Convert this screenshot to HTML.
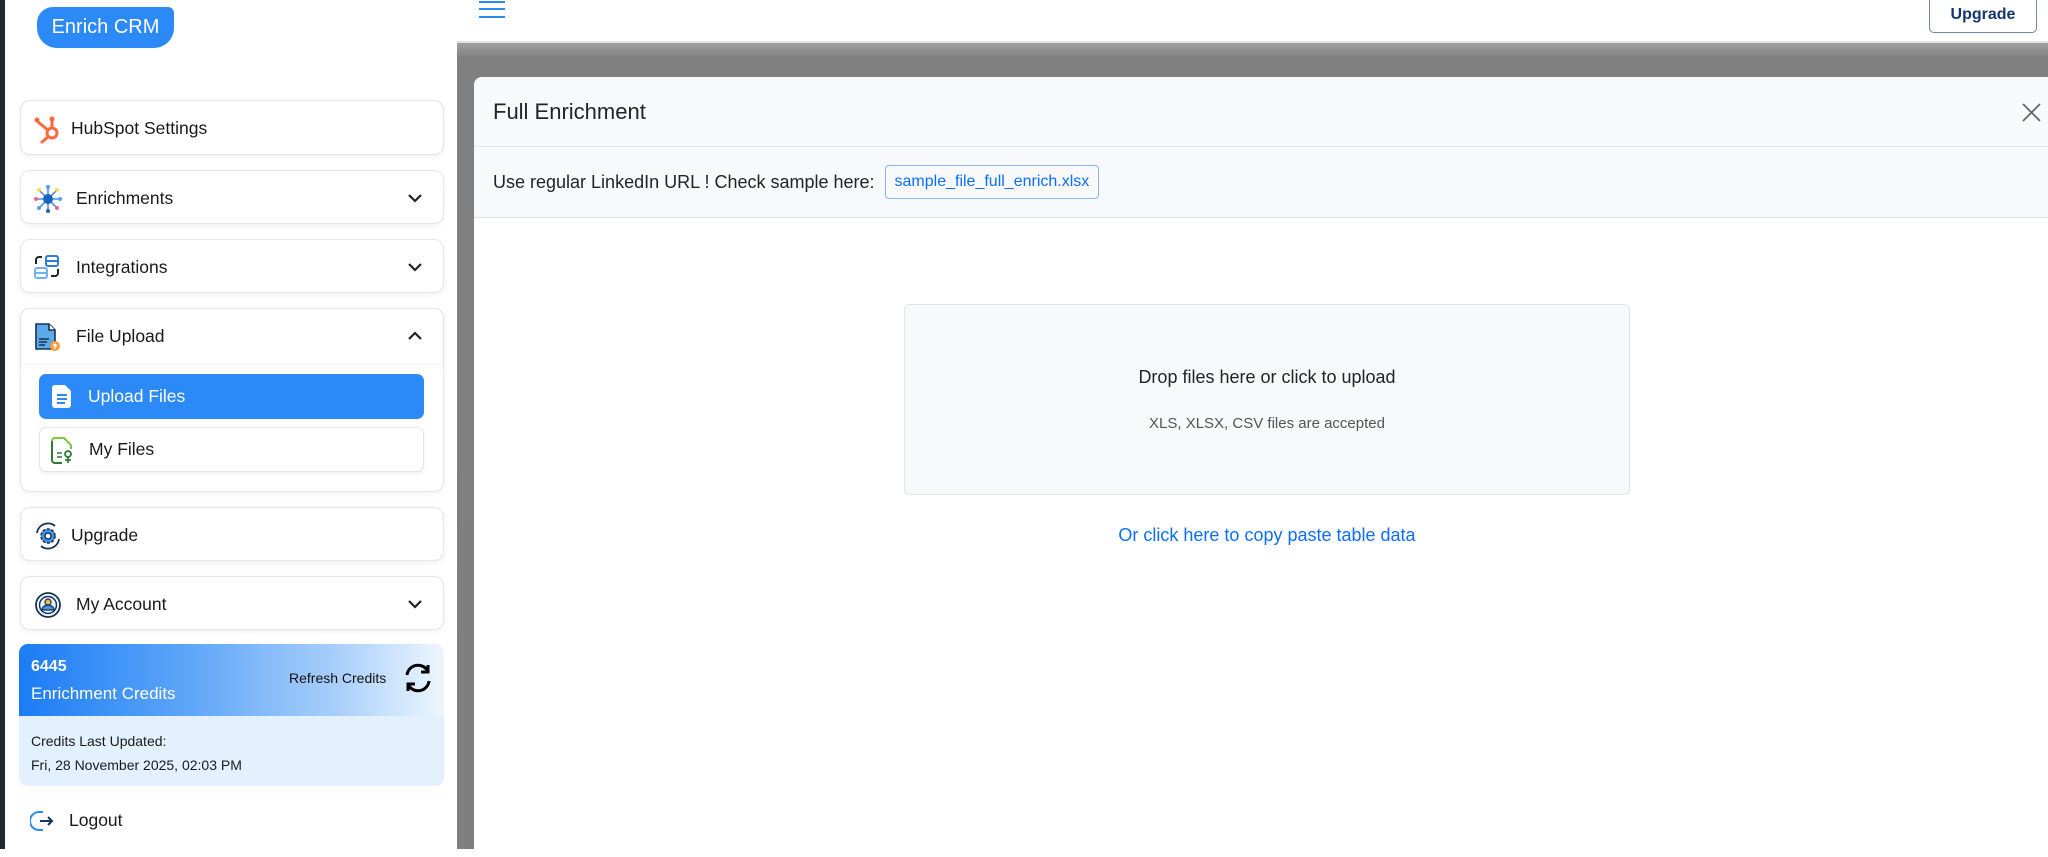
<!DOCTYPE html>
<html><head><meta charset="utf-8"><style>
*{box-sizing:border-box;margin:0;padding:0}
body{width:2048px;height:849px;overflow:hidden;position:relative;background:#fff;font-family:"Liberation Sans",sans-serif;color:#1a1a1a}
.strip{position:absolute;left:0;top:0;width:5px;height:849px;background:#1f2a33}
.side{position:absolute;left:5px;top:0;width:452px;height:849px;background:#fff}
.logo{position:absolute;left:37px;top:7px;width:137px;height:41px;background:#2b8af7;border-radius:0 6px 20px 20px;border-top-left-radius:16px;color:#fff;font-size:20px;line-height:41px;text-align:center}
.card{position:absolute;left:20px;width:424px;background:#fff;border:1px solid #e6e6e6;border-radius:10px;box-shadow:0 2px 6px rgba(0,0,0,.06)}
.row{height:54px;display:flex;align-items:center;font-size:17.5px;position:relative}
.row svg.ic{position:absolute;left:12px;top:13px}
.row span{position:absolute;left:55px}
.chev{position:absolute;right:20px;top:20px}
.sub{position:absolute;left:39px;width:385px;height:45px;border-radius:7px;display:flex;align-items:center;font-size:17.5px}
.sub span{position:absolute;left:49px}
.hdr{position:absolute;left:457px;top:0;width:1591px;height:43px;background:#fff;border-bottom:2px solid #e3e3e3}
.ovl{position:absolute;left:457px;top:43px;width:1591px;height:806px;background:linear-gradient(#a0a0a0,#808080 14px,#7f7f7f)}
.modal{position:absolute;left:474px;top:77px;width:1600px;height:780px;background:#fff;border-radius:8px;overflow:hidden}
.mh{height:70px;background:#f8f9fa;border-bottom:1px solid #e3e6e9;font-size:22px;line-height:70px;padding-left:19px;color:#212529}
.mr{height:71px;background:#f8f9fa;border-bottom:1px solid #e3e6e9;font-size:18px;color:#212529;padding-left:19px;display:flex;align-items:center}
.lk{display:inline-block;margin-left:10px;border:1px solid #86b7fe;border-radius:4px;color:#0d6efd;font-size:16px;padding:7px 9px;height:34px}
.dz{position:absolute;left:430px;top:227px;width:726px;height:191px;background:#f8f9fa;border:1px solid #e3e5e8;border-radius:6px;text-align:center}
</style></head><body>
<div class="strip"></div>
<div class="side">
</div>
<div class="logo">Enrich CRM</div>

<div class="card" style="top:100px;height:55px"><div class="row">
<svg class="ic" width="30" height="30" viewBox="0 0 30 30"><g stroke="#ff6a3d" stroke-width="3" fill="none" stroke-linecap="round"><circle cx="19" cy="19" r="5"/><line x1="19" y1="14" x2="19" y2="6"/><line x1="15" y1="16" x2="5" y2="8"/><line x1="15" y1="23" x2="9" y2="28"/></g><circle cx="19" cy="5" r="2.5" fill="#ff6a3d"/><circle cx="4" cy="6" r="2.5" fill="#ff6a3d"/></svg>
<span style="left:50px">HubSpot Settings</span></div></div>

<div class="card" style="top:170px;height:54px"><div class="row">
<svg class="ic" width="30" height="30" viewBox="0 0 30 30"><g stroke="#2b7be0" stroke-width="1.3"><line x1="15" y1="3" x2="15" y2="27"/><line x1="3" y1="15" x2="27" y2="15"/><line x1="6" y1="6" x2="24" y2="24"/><line x1="24" y1="6" x2="6" y2="24"/></g><circle cx="15" cy="15" r="5" fill="#1565c0"/><circle cx="15" cy="3" r="2" fill="#4aa3f0"/><circle cx="15" cy="27" r="2" fill="#1565c0"/><circle cx="3" cy="15" r="2" fill="#f06292"/><circle cx="27" cy="15" r="2" fill="#4aa3f0"/><circle cx="6" cy="6" r="2" fill="#ffd54f"/><circle cx="24" cy="6" r="2" fill="#ffd54f"/><circle cx="6" cy="24" r="2" fill="#4aa3f0"/><circle cx="24" cy="24" r="2" fill="#f06292"/></svg>
<span>Enrichments</span>
<svg class="chev" width="16" height="14" viewBox="0 0 16 14"><path d="M2 4l6 6 6-6" stroke="#222" stroke-width="2.2" fill="none"/></svg></div></div>

<div class="card" style="top:239px;height:54px"><div class="row">
<svg class="ic" width="30" height="30" viewBox="0 0 30 30"><rect x="13" y="3" width="12" height="10" rx="2" stroke="#2b7be0" stroke-width="2" fill="none"/><line x1="13" y1="8" x2="25" y2="8" stroke="#2b7be0" stroke-width="2"/><rect x="2" y="15" width="12" height="10" rx="2" stroke="#6fb2ef" stroke-width="2" fill="none"/><line x1="2" y1="20" x2="14" y2="20" stroke="#6fb2ef" stroke-width="2"/><path d="M3 11V7a3 3 0 0 1 3-3h3M25 16v4a3 3 0 0 1-3 3h-4" stroke="#222" stroke-width="2" fill="none"/></svg>
<span>Integrations</span>
<svg class="chev" width="16" height="14" viewBox="0 0 16 14"><path d="M2 4l6 6 6-6" stroke="#222" stroke-width="2.2" fill="none"/></svg></div></div>

<div class="card" style="top:308px;height:184px"><div class="row" style="box-shadow:0 3px 5px rgba(0,0,0,.04)">
<svg class="ic" width="30" height="30" viewBox="0 0 30 30"><path d="M3 2h13l6 6v19H3z" fill="#5fa8e8" stroke="#14325a" stroke-width="1.6"/><path d="M16 2v6h6" fill="#fff" stroke="#14325a" stroke-width="1.6"/><line x1="6" y1="17" x2="16" y2="17" stroke="#14325a" stroke-width="1.5"/><line x1="6" y1="20" x2="14" y2="20" stroke="#14325a" stroke-width="1.5"/><line x1="6" y1="23" x2="12" y2="23" stroke="#14325a" stroke-width="1.5"/><circle cx="22" cy="24" r="5" fill="#ff9a3c"/><path d="M22 27v-5M20 24l2-2 2 2" stroke="#fff" stroke-width="1.3" fill="none"/></svg>
<span>File Upload</span>
<svg class="chev" width="16" height="14" viewBox="0 0 16 14"><path d="M2 10l6-6 6 6" stroke="#222" stroke-width="2.2" fill="none"/></svg></div></div>

<div class="sub" style="top:374px;background:#2b8af7;color:#fff">
<svg style="position:absolute;left:12px;top:10px" width="22" height="25" viewBox="0 0 22 25"><path d="M4 1h10l6 6v14a3 3 0 0 1-3 3H4a3 3 0 0 1-3-3V4a3 3 0 0 1 3-3z" fill="#fff"/><g stroke="#2b8af7" stroke-width="2"><line x1="6" y1="11" x2="16" y2="11"/><line x1="6" y1="15" x2="16" y2="15"/><line x1="6" y1="19" x2="14" y2="19"/></g></svg>
<span>Upload Files</span></div>
<div class="sub" style="top:427px;background:#fff;border:1px solid #e6e6e6;box-shadow:0 2px 5px rgba(0,0,0,.06)">
<svg style="position:absolute;left:9px;top:9px" width="26" height="28" viewBox="0 0 26 28"><path d="M3 4a3 3 0 0 1 3-3h9l7 7v4" fill="none" stroke="#7ac943" stroke-width="2"/><path d="M3 4v19a3 3 0 0 0 3 3h7" fill="none" stroke="#2e7d32" stroke-width="2"/><path d="M8 16h5M8 20h5" stroke="#2e7d32" stroke-width="1.6"/><circle cx="19" cy="17" r="3" fill="none" stroke="#2e7d32" stroke-width="1.8"/><path d="M19 20v6M16 23h6" stroke="#2e7d32" stroke-width="1.8"/></svg>
<span style="color:#1a1a1a">My Files</span></div>

<div class="card" style="top:507px;height:54px"><div class="row">
<svg class="ic" width="30" height="30" viewBox="0 0 30 30"><circle cx="15" cy="15" r="7" fill="#4a90e2" stroke="#14325a" stroke-width="1.6" stroke-dasharray="3 1.5"/><circle cx="15" cy="15" r="3" fill="#fff" stroke="#14325a" stroke-width="1.4"/><path d="M4 12a11 11 0 0 1 18-7M26 18a11 11 0 0 1-18 7" stroke="#14325a" stroke-width="1.8" fill="none"/></svg>
<span style="left:50px">Upgrade</span></div></div>

<div class="card" style="top:576px;height:54px"><div class="row">
<svg class="ic" width="30" height="30" viewBox="0 0 30 30"><circle cx="15" cy="15" r="12" fill="none" stroke="#14325a" stroke-width="1.8"/><circle cx="15" cy="15" r="8.5" fill="#e6f0fa" stroke="#14325a" stroke-width="1.5"/><circle cx="15" cy="12" r="3" fill="#ffb74d" stroke="#14325a" stroke-width="1.2"/><path d="M9 20a6 5 0 0 1 12 0z" fill="#4a90e2" stroke="#14325a" stroke-width="1.2"/></svg>
<span>My Account</span>
<svg class="chev" width="16" height="14" viewBox="0 0 16 14"><path d="M2 4l6 6 6-6" stroke="#222" stroke-width="2.2" fill="none"/></svg></div></div>

<div style="position:absolute;left:19px;top:644px;width:425px;height:142px;background:#e3f0fd;border-radius:9px;overflow:hidden">
<div style="height:72px;background:linear-gradient(90deg,#1b7cf5 0%,#5ea6f8 40%,#a9cffa 75%,#eef6fe 100%);position:relative;color:#fff">
<div style="position:absolute;left:12px;top:14px;font-size:16px;font-weight:bold">6445</div>
<div style="position:absolute;left:12px;top:40px;font-size:17px">Enrichment Credits</div>
<div style="position:absolute;left:270px;top:26px;font-size:14px;color:#111">Refresh Credits</div>
<svg style="position:absolute;left:383px;top:18px" width="32" height="32" viewBox="0 0 32 32"><path d="M5 13A11 11 0 0 1 25 8M27 19A11 11 0 0 1 7 24" stroke="#000" stroke-width="3" fill="none"/><path d="M26 3v7h-7M6 29v-7h7" stroke="#000" stroke-width="3" fill="none"/></svg>
</div>
<div style="position:absolute;left:12px;top:89px;font-size:14px">Credits Last Updated:</div>
<div style="position:absolute;left:12px;top:113px;font-size:14px">Fri, 28 November 2025, 02:03 PM</div>
</div>

<svg style="position:absolute;left:30px;top:809px" width="24" height="24" viewBox="0 0 24 24"><path d="M13 3H9a7 7 0 0 0 0 18h4" stroke="#2b8af7" stroke-width="2" fill="none"/><path d="M10 12h12M18 8l4 4-4 4" stroke="#14325a" stroke-width="2" fill="none"/></svg>
<div style="position:absolute;left:69px;top:810px;font-size:17.5px">Logout</div>

<div class="hdr">
<svg style="position:absolute;left:22px;top:0" width="26" height="20" viewBox="0 0 26 20"><g stroke="#2b8af7" stroke-width="2"><line x1="0" y1="2" x2="26" y2="2"/><line x1="0" y1="9" x2="26" y2="9"/><line x1="0" y1="17" x2="26" y2="17"/></g></svg>
<div style="position:absolute;left:1472px;top:-4px;width:108px;height:37px;border:1.5px solid #6d87b0;border-radius:5px;color:#14366e;font-weight:bold;font-size:16px;text-align:center;line-height:23px;padding-top:6px">Upgrade</div>
</div>
<div class="ovl"></div>
<div class="modal">
<div class="mh">Full Enrichment</div>
<div class="mr">Use regular LinkedIn URL ! Check sample here: <span class="lk">sample_file_full_enrich.xlsx</span></div>
<svg style="position:absolute;left:1548px;top:26px" width="19" height="19" viewBox="0 0 19 19"><path d="M1 1l17 17M18 1L1 18" stroke="#666" stroke-width="1.8"/></svg>
<div class="dz">
<div style="position:absolute;left:0;right:0;top:62px;font-size:18px;color:#212529">Drop files here or click to upload</div>
<div style="position:absolute;left:0;right:0;top:110px;font-size:15px;color:#555">XLS, XLSX, CSV files are accepted</div>
</div>
<div style="position:absolute;left:430px;width:726px;top:448px;text-align:center;font-size:18px;color:#0d6efd">Or click here to copy paste table data</div>
</div>
</body></html>
